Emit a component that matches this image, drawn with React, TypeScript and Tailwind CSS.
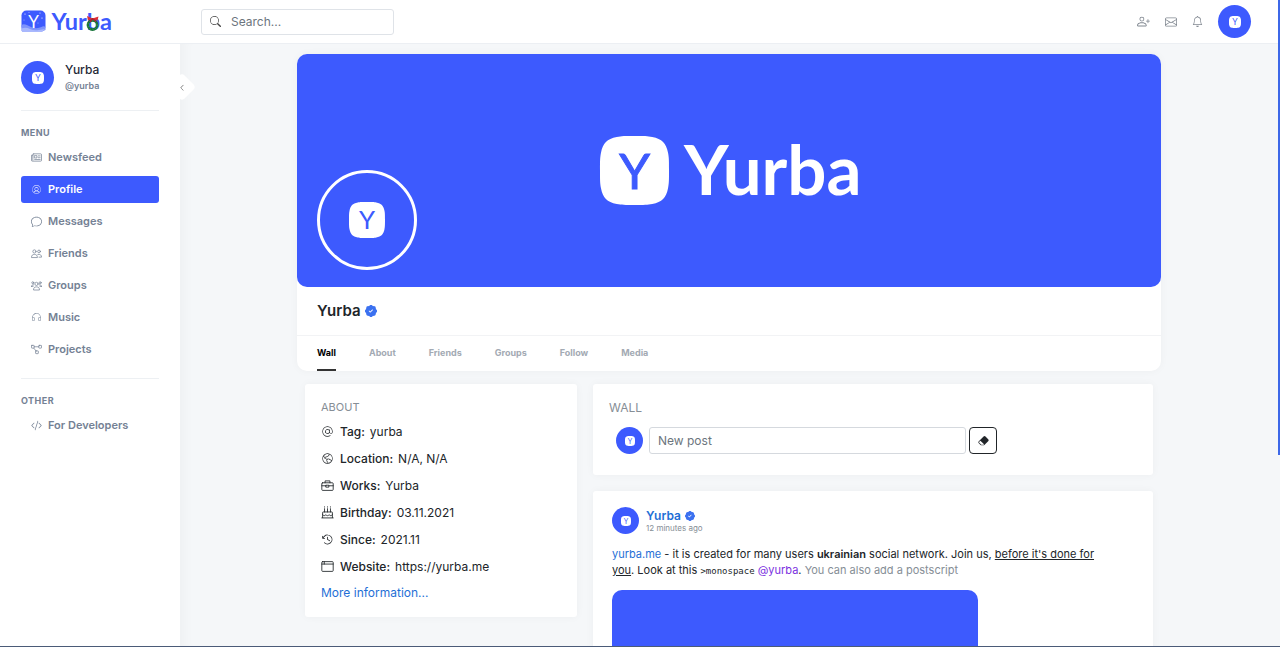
import type { ComponentType, ReactNode } from "react";
import {
  BsBell,
  BsChat,
  BsChevronLeft,
  BsCodeSlash,
  BsEnvelope,
  BsEraserFill,
  BsPatchCheckFill,
  BsPersonPlus,
  BsSearch,
} from "react-icons/bs";
import { PiAtLight, PiClockCounterClockwise, PiGlobeHemisphereWestLight, PiHeadphonesLight, PiUserCircleLight } from "react-icons/pi";

type Icon = ComponentType<{ className?: string }>;

const SQUIRCLE = "M0 35C0 25 0 22 1 17C3 7 7 3 17 1C22 0 25 0 35 0S48 0 53 1C63 3 67 7 69 17C70 22 70 25 70 35S70 48 69 53C67 63 63 67 53 69C48 70 45 70 35 70S22 70 17 69C7 67 3 63 1 53C0 48 0 45 0 35Z";

function Mark({ className }: { className: string }) {
  return (
    <svg viewBox="0 0 70 70" className={className} aria-hidden="true">
      <path d={SQUIRCLE} fill="#fff" />
      <text x="35" y="53" textAnchor="middle" fontFamily="Lato" fontSize="50" fill="#3d5afe">
        Y
      </text>
    </svg>
  );
}

function Avatar({ className, mark }: { className: string; mark: string }) {
  return (
    <span className={"flex shrink-0 items-center justify-center rounded-full bg-[#3d5afe] " + className}>
      <Mark className={mark} />
    </span>
  );
}

function HeaderLogo() {
  return (
    <svg viewBox="0 -4 96 34" className="h-[34px] w-24" role="img" aria-label="Yurba">
      <rect x="0.500" y="1.500" width="24" height="21" rx="5" fill="#3d5afe" />
      <path d="M.5 16C3 14 6 16 9 17.500S15 20 19 18.500 23 17 24.500 18V21Q19 24 13 22.500T.5 22Z" fill="#7f93fb" />
      <path d="M.5 19.500Q5 18 9 20T18 21L24 20 21 23H1Z" fill="#a9b8fd" />
      <g fill="#fff">
        <circle cx="4" cy="5" r=".6" />
        <circle cx="8" cy="3.500" r=".4" />
        <circle cx="19" cy="4" r=".5" />
        <circle cx="21" cy="9" r=".6" />
        <circle cx="3" cy="11" r=".4" />
        <circle cx="17" cy="14" r=".4" />
      </g>
      <text x="12.500" y="19" textAnchor="middle" fontFamily="Lato" fontSize="17" fill="#fff">Y</text>
      <text x="30.500" y="21" fontFamily="Lato" fontWeight="700" fontSize="23.500" fill="#3d5afe">Yurba</text>
      <circle cx="71.500" cy="16" r="4.600" fill="none" stroke="#18743a" strokeWidth="2.600" />
      <circle cx="71.500" cy="16" r="4.600" fill="none" stroke="#58a862" strokeWidth=".7" strokeDasharray="1 2" />
      <path d="M71.500 9.500 66 7 67 11.500 71.500 10 76.500 11.500 77.500 7.500Z" fill="#dc2f36" />
      <path d="M71.500 9.500 69 13M71.500 9.500 75 12.500" stroke="#b91c2b" strokeWidth="1.300" />
    </svg>
  );
}

function Line({ className, children }: { className?: string; children: ReactNode }) {
  return (
    <svg viewBox="0 0 24 24" className={className} fill="none" stroke="currentColor" strokeWidth="1.600" strokeLinejoin="round" strokeLinecap="round" aria-hidden="true">
      {children}
    </svg>
  );
}

const NewsIcon: Icon = ({ className }) => (
  <Line className={className}>
    <path d="M5 4h16a2 2 0 0 1 2 2v12a2 2 0 0 1-2 2H3a2 2 0 0 1-2-2V7h3" />
    <path d="M4 18V6a2 2 0 0 1 2-2M8 8h5v5H8zM16 8.500h4M16 12.500h4M8 16.500h12" />
  </Line>
);

const FriendsIcon: Icon = ({ className }) => (
  <Line className={className}>
    <circle cx="7.500" cy="7.500" r="3.500" />
    <circle cx="17.500" cy="7.500" r="3" />
    <path d="M1 20c0-4 2.500-6 6.500-6s6.500 2 6.500 6zM15 14c5-1 8 1.500 8 6h-5.500" />
  </Line>
);

const GroupsIcon: Icon = ({ className }) => (
  <Line className={className}>
    <circle cx="4" cy="6" r="2.200" />
    <circle cx="20" cy="6" r="2.200" />
    <circle cx="12" cy="8.500" r="3.500" />
    <path d="M1 14c0-2.500 1.500-3.500 5-3.500M23 14c0-2.500-1.500-3.500-5-3.500M1 14h3.500M23 14h-3.500M5.500 21c0-4 2.200-6 6.500-6s6.500 2 6.500 6z" />
  </Line>
);

const ProjectsIcon: Icon = ({ className }) => (
  <Line className={className}>
    <rect x="1" y="3" width="6" height="6" rx="1" />
    <rect x="17" y="3" width="6" height="6" rx="1" />
    <rect x="10" y="15" width="6" height="6" rx="1" />
    <path d="M7 6h10M6 9l5 6" />
  </Line>
);

const WorksIcon: Icon = ({ className }) => (
  <Line className={className}>
    <rect x="1.500" y="7" width="21" height="14" rx="1.500" />
    <path d="M7.500 7V3.500h9V7M1.500 12.500h8M14.500 12.500h8M9.500 11.500h5v3.500h-5z" />
  </Line>
);

const CakeIcon: Icon = ({ className }) => (
  <Line className={className}>
    <path d="M6.500 5v6M12 5v6M17.500 5v6M6.500 1.500v.5M12 1.500v.5M17.500 1.500v.5M3 21.500V12a1 1 0 0 1 1-1h16a1 1 0 0 1 1 1v9.500M1.500 22h21M3 16c2 2.500 4 2.500 6 0 2 2.500 4 2.500 6 0 2 2.500 4 2.500 6 0" />
  </Line>
);

const WindowIcon: Icon = ({ className }) => (
  <Line className={className}>
    <rect x="1.500" y="3" width="21" height="18" rx="1.500" />
    <path d="M1.500 7.500h21M6 3v4.500" />
  </Line>
);

const menu: { label: string; icon: Icon; active?: boolean }[] = [
  { label: "Newsfeed", icon: NewsIcon },
  { label: "Profile", icon: PiUserCircleLight, active: true },
  { label: "Messages", icon: BsChat },
  { label: "Friends", icon: FriendsIcon },
  { label: "Groups", icon: GroupsIcon },
  { label: "Music", icon: PiHeadphonesLight },
  { label: "Projects", icon: ProjectsIcon },
];

const facts: { label: string; value: string; icon: Icon }[] = [
  { label: "Tag:", value: "yurba", icon: PiAtLight },
  { label: "Location:", value: "N/A, N/A", icon: PiGlobeHemisphereWestLight },
  { label: "Works:", value: "Yurba", icon: WorksIcon },
  { label: "Birthday:", value: "03.11.2021", icon: CakeIcon },
  { label: "Since:", value: "2021.11", icon: PiClockCounterClockwise },
  { label: "Website:", value: "https://yurba.me", icon: WindowIcon },
];

function NavItem({ label, icon: Glyph, active }: { label: string; icon: Icon; active?: boolean }) {
  return (
    <a
      href="#"
      className={
        "flex h-[27px] items-center gap-[5px] rounded-[3px] pl-[9px] text-[11px] font-semibold " +
        (active ? "bg-[#3d5afe] text-white" : "text-[#748194]")
      }
    >
      <Glyph className="size-[13px] p-px" />
      {label}
    </a>
  );
}

function Card({ className, children }: { className: string; children: ReactNode }) {
  return <section className={"rounded-[3px] bg-white shadow-[0_0_8px_rgba(0,0,0,0.04)] " + className}>{children}</section>;
}

function Header() {
  return (
    <header className="flex h-11 shrink-0 items-center border-b border-[#eceff3] bg-white pr-[29px]">
      <a href="#" className="flex w-[180px] shrink-0 pl-[21px]">
        <HeaderLogo />
      </a>
      <label className="ml-[21px] flex h-[26px] w-[193px] items-center gap-[10px] rounded-[3px] border border-[#dfe3e8] px-2">
        <BsSearch className="size-[11px] shrink-0 text-[#444]" />
        <input
          type="search"
          aria-label="Search"
          placeholder="Search..."
          className="w-full min-w-0 bg-transparent text-[12px] outline-none placeholder:text-[#6c757d]"
        />
      </label>
      <div className="ml-auto flex items-center gap-[15px] text-[#808790]">
        <button type="button" aria-label="Friend requests"><BsPersonPlus className="size-[13px]" /></button>
        <button type="button" aria-label="Messages"><BsEnvelope className="size-3" /></button>
        <button type="button" aria-label="Notifications"><BsBell className="size-[11px]" /></button>
        <button type="button" aria-label="Account"><Avatar className="size-[33px]" mark="size-3" /></button>
      </div>
    </header>
  );
}

function Sidebar() {
  return (
    <aside className="relative w-[180px] shrink-0 bg-white px-[21px] pt-[17px]">
      <div className="flex items-center gap-[11px]">
        <Avatar className="size-[33px]" mark="size-3" />
        <div>
          <p className="text-[12px] leading-4 font-medium text-[#1f2937]">Yurba</p>
          <p className="text-[9px] leading-4 font-semibold text-[#748194]">@yurba</p>
        </div>
      </div>
      <hr className="mt-4 border-[#edf0f3]" />
      <h2 className="mt-4 text-[9px] leading-3 font-bold tracking-wider text-[#748194]">MENU</h2>
      <nav className="mt-[5px] flex flex-col gap-[5px]">
        {menu.map((item) => (
          <NavItem key={item.label} {...item} />
        ))}
      </nav>
      <hr className="mt-[15px] border-[#edf0f3]" />
      <h2 className="mt-4 text-[9px] leading-3 font-bold tracking-wider text-[#748194]">OTHER</h2>
      <nav className="mt-[5px]">
        <NavItem label="For Developers" icon={BsCodeSlash} />
      </nav>
      <button type="button" aria-label="Collapse menu" className="absolute top-[33px] -right-[12px] z-10 flex size-[20px] rotate-45 items-center justify-center rounded-[4px] bg-white">
        <BsChevronLeft className="size-[7px] -rotate-45 text-[#333]" />
      </button>
    </aside>
  );
}

function ProfileCard() {
  const tabs = ["Wall", "About", "Friends", "Groups", "Follow", "Media"];
  return (
    <section className="rounded-[10px] bg-white shadow-[0_0_8px_rgba(0,0,0,0.04)]">
      <div className="relative flex h-[233px] items-center justify-center rounded-[10px] bg-[#3d5afe]">
        <svg viewBox="-2 -16 264 101" className="h-[101px] w-[264px]" role="img" aria-label="Yurba">
          <g transform="translate(1) scale(.986)">
            <path d={SQUIRCLE} fill="#fff" />
            <text x="35" y="53.500" textAnchor="middle" fontFamily="Lato" fontSize="50" fill="#3d5afe" stroke="#3d5afe">Y</text>
          </g>
          <text x="85" y="58.500" fontFamily="Lato" fontWeight="700" fontSize="69" fill="#fff">Yurba</text>
        </svg>
        <Avatar className="absolute bottom-[17px] left-5 size-[100px] border-[3px] border-white" mark="size-9" />
      </div>
      <h1 className="flex h-12 items-center gap-1 px-5 text-[15px] font-semibold text-[#212529]">
        Yurba <BsPatchCheckFill className="size-3 text-[#3b71f0]" />
      </h1>
      <nav className="flex gap-[33px] border-t border-[#f2f3f5] px-5 text-[9px] font-bold text-[#a3aab3]">
        {tabs.map((tab, i) => (
          <a
            key={tab}
            href="#"
            className={"flex h-[35px] items-center border-b-2 " + (i === 0 ? "border-[#333] text-black" : "border-transparent")}
          >
            {tab}
          </a>
        ))}
      </nav>
    </section>
  );
}

function AboutCard() {
  return (
    <Card className="w-[272px] shrink-0 px-4 pt-[15px] pb-[13px] text-[12px] text-[#212529]">
      <h2 className="text-[11px] leading-4 text-[#868e96]">ABOUT</h2>
      <dl className="mt-[3px]">
        {facts.map(({ label, value, icon: Glyph }) => (
          <div key={label} className="flex h-[27px] items-center">
            <Glyph className="mr-[6px] size-[13px]" />
            <dt className="mr-[5px] font-medium">{label}</dt>
            <dd>{value}</dd>
          </div>
        ))}
      </dl>
      <a href="#" className="mt-0.5 block leading-[22px] text-[#1f6fd6]">More information...</a>
    </Card>
  );
}

function WallCard() {
  return (
    <Card className="px-4 pt-4 pb-[21px]">
      <h2 className="text-[12px] leading-4 text-[#868e96]">WALL</h2>
      <div className="mt-[11px] flex items-center pl-[7px]">
        <Avatar className="mr-[6px] size-[27px]" mark="size-2.5" />
        <input
          aria-label="New post"
          placeholder="New post"
          className="mr-[3px] h-[27px] w-[317px] rounded-[3px] border border-[#d5d9de] px-2 text-[12px] outline-none placeholder:text-[#6c757d]"
        />
        <button type="button" aria-label="Clear" className="flex h-[27px] w-7 items-center justify-center rounded-[4px] border border-[#212529] text-[#212529]">
          <BsEraserFill className="size-[11px]" />
        </button>
      </div>
    </Card>
  );
}

function Post() {
  return (
    <Card className="px-[19px] pt-4">
      <div className="flex items-center gap-[7px]">
        <Avatar className="size-[27px]" mark="size-2.5" />
        <div>
          <a href="#" className="flex items-center gap-1 text-[12px] leading-[15px] font-semibold text-[#1f6fd6]">
            Yurba <BsPatchCheckFill className="size-2.5 text-[#3b71f0]" />
          </a>
          <p className="text-[8px] leading-[10px] text-[#868e96]">12 minutes ago</p>
        </div>
      </div>
      <p className="mt-3 max-w-[502px] text-[11px] leading-4 text-[#212529]">
        <a href="#" className="text-[#1f6fd6]">yurba.me</a> - it is created for many users <b className="font-semibold">ukrainian</b> social network. Join us,{" "}
        <u>before it's done for you</u>. Look at this{" "}
        <code className="font-['DejaVu_Sans_Mono',monospace] text-[9px]">&gt;monospace</code>{" "}
        <a href="#" className="text-[#7b2fe0]">@yurba</a>. <span className="text-[#868e96]">You can also add a postscript</span>
      </p>
      <div className="mt-[11px] h-[206px] w-[366px] rounded-[10px] bg-[#3d5afe]" />
    </Card>
  );
}

export default function App() {
  return (
    <div className="relative flex h-screen flex-col overflow-hidden border-b border-[#4b5b78] bg-[#f5f7f9] font-['Inter',sans-serif]">
      <Header />
      <div className="flex min-h-0 flex-1">
        <Sidebar />
        <main className="min-w-0 flex-1 overflow-hidden pt-[10px] pr-[26px] pl-6 shadow-[inset_12px_0_12px_-8px_rgba(0,0,0,0.03)]">
          <div className="mx-auto max-w-[864px]">
            <ProfileCard />
            <div className="mt-[13px] flex items-start gap-4 px-2">
              <AboutCard />
              <div className="flex min-w-0 flex-1 flex-col gap-4">
                <WallCard />
                <Post />
              </div>
            </div>
          </div>
        </main>
      </div>
      <div className="absolute top-0 right-0 h-[455px] w-0.5 bg-[#3d68e8]" />
    </div>
  );
}
